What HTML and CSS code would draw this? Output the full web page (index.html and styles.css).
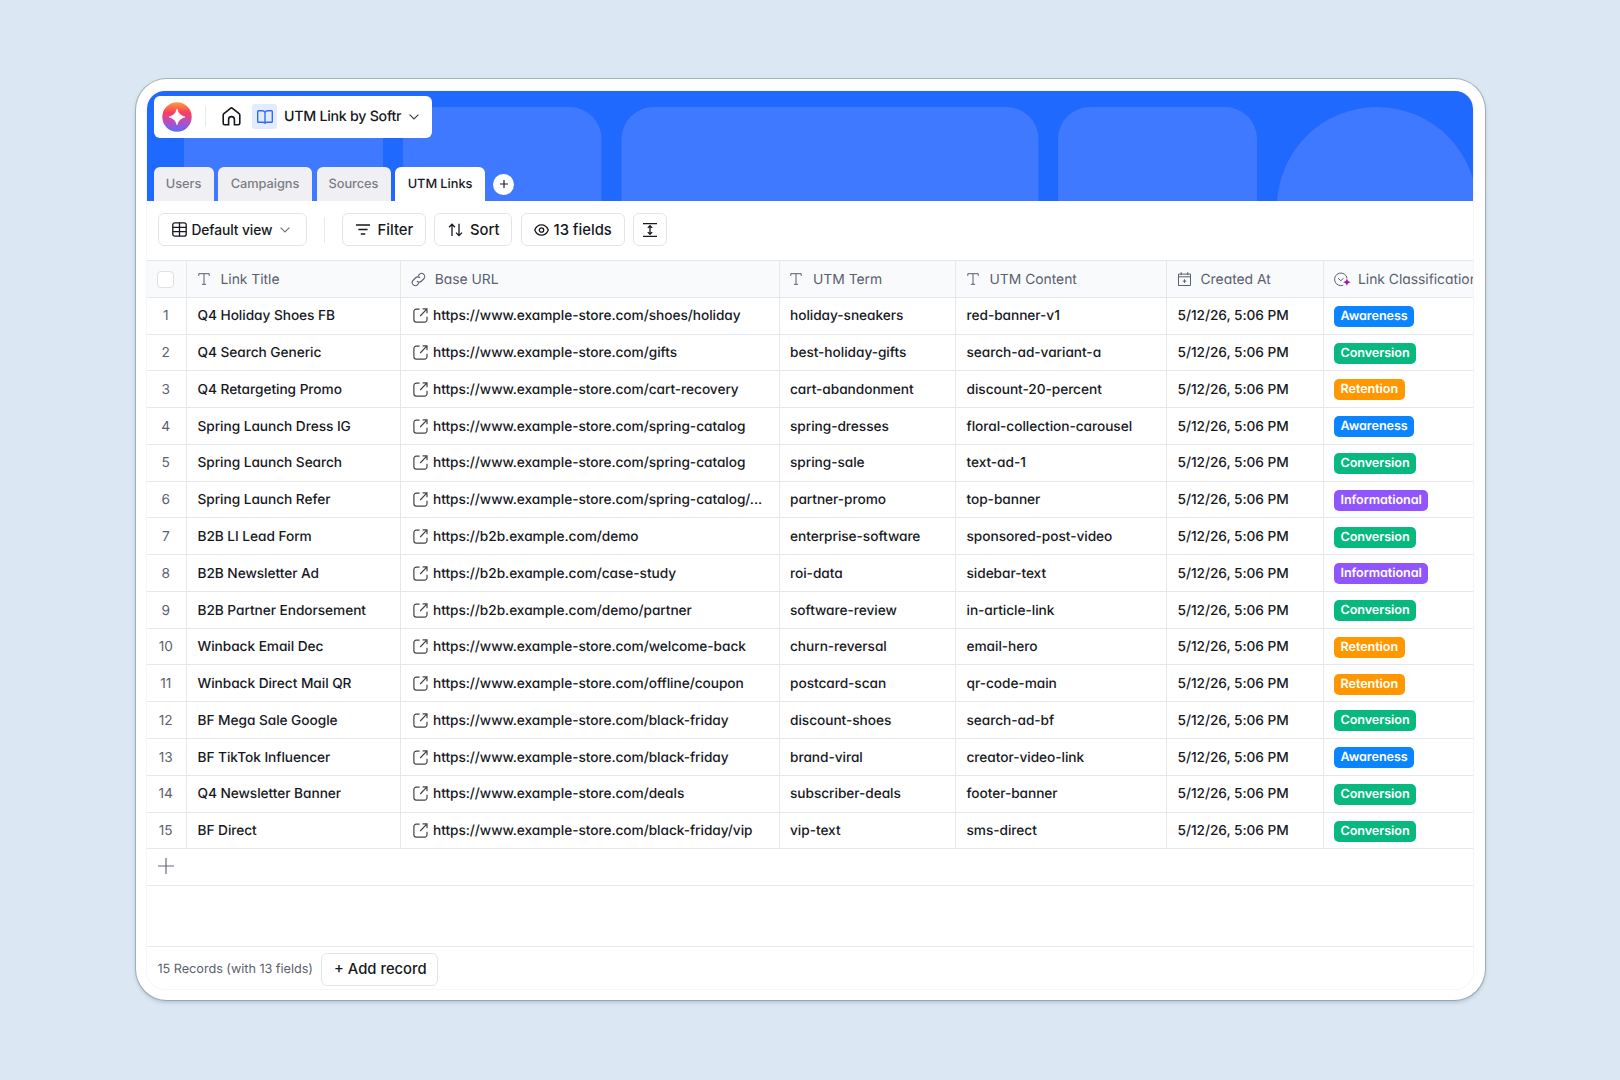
FILE: index.html
```html
<!DOCTYPE html>
<html lang="en">
<head>
<meta charset="utf-8">
<title>UTM Link by Softr</title>
<link rel="stylesheet" href="styles.css">
</head>
<body>
<svg class="sprite" width="0" height="0" aria-hidden="true">
  <symbol id="i-text" viewBox="0 0 12 12"><path d="M.8 2.9V.7h10.4v2.2M6 .7v10.6M3.9 11.3h4.2"/></symbol>
  <symbol id="i-open" viewBox="0 0 15 15"><path d="M6.6 1.2H3.2A2.3 2.3 0 0 0 .9 3.5v8.300a2.300 2.300 0 0 0 2.300 2.300h8.500a2.300 2.300 0 0 0 2.300-2.300V8.700M9.600.900H14v4.400M14 .900 7.200 8"/></symbol>
  <symbol id="i-chev" viewBox="0 0 10 6"><path d="M.6.6 5 5 9.400.6"/></symbol>
</svg>
<main class="window">
  <div class="app">
    <header class="banner">
      <svg class="shapes" viewBox="0 0 1326 110" width="1326" height="110">
        <rect x="37" y="16" width="199" height="140" rx="32"/>
        <rect x="256" y="16" width="198.500" height="140" rx="32"/>
        <rect x="474.500" y="16" width="417" height="140" rx="32"/>
        <rect x="911" y="16" width="199" height="140" rx="32"/>
        <circle cx="1230" cy="116" r="100"/>
      </svg>
      <div class="brand">
        <svg class="logo" viewBox="0 0 30 30">
          <defs><linearGradient id="lg" x1="0" y1="0" x2="0" y2="1"><stop offset="0" stop-color="#ff9a3d"/><stop offset=".35" stop-color="#fb3f5c"/><stop offset=".62" stop-color="#c24bb5"/><stop offset="1" stop-color="#5b6cff"/></linearGradient></defs>
          <circle cx="15" cy="15" r="14.700" fill="url(#lg)"/>
          <path d="M15 7C16.200 11.400 18.600 13.800 23 15 18.600 16.200 16.200 18.600 15 23 13.800 18.600 11.400 16.200 7 15 11.400 13.800 13.800 11.400 15 7Z" fill="#fff" stroke="#fff" stroke-width=".6" stroke-linejoin="round"/>
        </svg>
        <i class="sep"></i>
        <svg class="home" viewBox="0 0 19 19"><path d="M6.600 17.800H2.700a1.500 1.500 0 0 1-1.500-1.500V8c0-.6.2-1 .7-1.400L8.500 1.300a1.600 1.600 0 0 1 2 0l6.600 5.300c.5.400.7.800.7 1.400v8.300a1.500 1.500 0 0 1-1.500 1.500h-3.900v-5.300a2.900 2.900 0 0 0-5.800 0z"/></svg>
        <span class="book"><svg viewBox="0 0 16 14"><path d="M8 2.300C7.400 1.300 6.500.8 5.300.8H1.500a.8.8 0 0 0-.8.8v9.900c0 .4.300.8.800.8h4.200c1.200 0 1.900.3 2.300.9.4-.6 1.100-.9 2.300-.9h4.200c.5 0 .8-.4.8-.8V1.600a.8.8 0 0 0-.8-.8h-3.800C9.500.8 8.600 1.300 8 2.300zM8 2.300v10.900"/></svg></span>
        <h1 class="title">UTM Link by Softr</h1>
        <svg class="chev"><use href="#i-chev"/></svg>
      </div>
      <nav class="tabs">
        <a class="tab t1">Users</a><a class="tab t2">Campaigns</a><a class="tab t3">Sources</a><a class="tab active t4">UTM Links</a>
        <button class="plus"><svg viewBox="0 0 8 8"><path d="M4 0v8M0 4h8"/></svg></button>
      </nav>
    </header>
    <div class="toolbar">
      <button class="btn b-view"><svg width="15" height="15" viewBox="0 0 15 15"><rect x=".8" y=".8" width="13.400" height="13.400" rx="2"/><path d="M.8 5.300h13.400M.8 9.700h13.400M7.500.8v13.400"/></svg><span>Default view</span><svg class="chev grey"><use href="#i-chev"/></svg></button>
      <i class="sep"></i>
      <button class="btn b-filter"><svg width="14" height="11" viewBox="0 0 14 11"><path d="M0 1h14M2.400 5.500h9.200M4.800 10h4.400"/></svg><span>Filter</span></button>
      <button class="btn b-sort"><svg width="15" height="14" viewBox="0 0 15 14"><path d="M4 13V1.200M1 4.200l3-3 3 3M11 .700v11.900M8 9.600l3 3 3-3"/></svg><span>Sort</span></button>
      <button class="btn b-fields"><svg width="15" height="12" viewBox="0 0 15 12"><path d="M.7 6C2 2.800 4.500.9 7.500.9S13 2.800 14.300 6c-1.300 3.200-3.800 5.100-6.800 5.100S2 9.200.7 6z"/><circle cx="7.500" cy="6" r="2.200"/></svg><span>13 fields</span></button>
      <button class="btn b-height"><svg width="14" height="14" viewBox="0 0 14 14"><path d="M0 .700h14M0 13.300h14M7 3v8M4.800 4.900 7 2.700l2.200 2.200M4.800 9.100 7 11.300l2.200-2.200"/></svg></button>
    </div>
    <section class="table" id="table">
      <div class="row head">
        <div class="cell num"><i class="check"></i></div>
        <div class="cell"><svg class="ic t"><use href="#i-text"/></svg><span>Link Title</span></div>
        <div class="cell"><svg class="ic link" viewBox="0 0 24 24"><path d="M9.500 14.500a4.800 4.800 0 0 0 7 .3l4-4a4.900 4.900 0 0 0-7-7l-2.200 2.200M14.500 9.500a4.800 4.800 0 0 0-7-.3l-4 4a4.900 4.900 0 0 0 7 7l2.200-2.200"/></svg><span>Base URL</span></div>
        <div class="cell"><svg class="ic t"><use href="#i-text"/></svg><span>UTM Term</span></div>
        <div class="cell"><svg class="ic t"><use href="#i-text"/></svg><span>UTM Content</span></div>
        <div class="cell"><svg class="ic cal" viewBox="0 0 13 14"><path d="M.5 2.100h12v11.400H.5zM.5 4.800h12M3.200.2v2.900M9.800.2v2.900M6.500 7.300v3.600M4.700 9.100h3.600"/></svg><span>Created At</span></div>
        <div class="cell last"><svg class="ic ai" viewBox="0 0 17 15"><path d="M13.100 6.300A6.300 6.300 0 1 0 9.200 13.200M4 6.200l2.800 2.500 2.800-2.500"/><path class="spark" d="M12.900 6.300c.6 2.500 1.300 3.200 3.900 3.900-2.600.7-3.300 1.400-3.900 3.900-.6-2.500-1.300-3.200-3.900-3.900 2.600-.7 3.300-1.400 3.900-3.900z"/></svg><span>Link Classification</span></div>
      </div>
    </section>
    <div class="addrow"><svg width="16" height="16" viewBox="0 0 16 16"><path d="M8 0v16M0 8h16"/></svg></div>
    <footer class="footer"><span class="count">15 Records (with 13 fields)</span><button class="btn b-add">+ Add record</button></footer>
  </div>
</main>
<script src="rows.js"></script>
</body>
</html>
```
FILE: rows.js
```js
const S = 'https://www.example-store.com/';
const B = 'https://b2b.example.com/';
const rows = [
  ['Q4 Holiday Shoes FB', S + 'shoes/holiday', 'holiday-sneakers', 'red-banner-v1', 'Awareness'],
  ['Q4 Search Generic', S + 'gifts', 'best-holiday-gifts', 'search-ad-variant-a', 'Conversion'],
  ['Q4 Retargeting Promo', S + 'cart-recovery', 'cart-abandonment', 'discount-20-percent', 'Retention'],
  ['Spring Launch Dress IG', S + 'spring-catalog', 'spring-dresses', 'floral-collection-carousel', 'Awareness'],
  ['Spring Launch Search', S + 'spring-catalog', 'spring-sale', 'text-ad-1', 'Conversion'],
  ['Spring Launch Refer', S + 'spring-catalog/...', 'partner-promo', 'top-banner', 'Informational'],
  ['B2B LI Lead Form', B + 'demo', 'enterprise-software', 'sponsored-post-video', 'Conversion'],
  ['B2B Newsletter Ad', B + 'case-study', 'roi-data', 'sidebar-text', 'Informational'],
  ['B2B Partner Endorsement', B + 'demo/partner', 'software-review', 'in-article-link', 'Conversion'],
  ['Winback Email Dec', S + 'welcome-back', 'churn-reversal', 'email-hero', 'Retention'],
  ['Winback Direct Mail QR', S + 'offline/coupon', 'postcard-scan', 'qr-code-main', 'Retention'],
  ['BF Mega Sale Google', S + 'black-friday', 'discount-shoes', 'search-ad-bf', 'Conversion'],
  ['BF TikTok Influencer', S + 'black-friday', 'brand-viral', 'creator-video-link', 'Awareness'],
  ['Q4 Newsletter Banner', S + 'deals', 'subscriber-deals', 'footer-banner', 'Conversion'],
  ['BF Direct', S + 'black-friday/vip', 'vip-text', 'sms-direct', 'Conversion'],
];
document.getElementById('table').insertAdjacentHTML('beforeend', rows.map((r, i) => `
  <div class="row">
    <div class="cell num">${i + 1}</div>
    <div class="cell">${r[0]}</div>
    <div class="cell url"><svg class="open"><use href="#i-open"/></svg>${r[1]}</div>
    <div class="cell">${r[2]}</div>
    <div class="cell">${r[3]}</div>
    <div class="cell">5/12/26, 5:06 PM</div>
    <div class="cell last"><span class="tag ${r[4].toLowerCase()}">${r[4]}</span></div>
  </div>`).join(''));
```
FILE: styles.css
```css
* { box-sizing: border-box; }
body {
  margin: 0;
  width: 1620px;
  height: 1080px;
  padding: 79px 0 0 135.500px;
  background: #dbe8f3;
  font-family: Inter, "Liberation Sans", sans-serif;
  text-rendering: geometricPrecision;
  color: #16181d;
  overflow: hidden;
}
.sprite { position: absolute; }
svg { display: block; flex: none; fill: none; stroke: currentColor; stroke-width: 1.300; }
svg.logo, svg.shapes { stroke: none; }
button { font: inherit; color: inherit; cursor: pointer; }
.window {
  width: 1349.500px;
  height: 921px;
  padding: 12px 12px 11.500px 11.500px;
  border-radius: 31px;
  background: #fff;
  box-shadow: 0 0 0 1px rgba(120, 135, 145, .5), 0 2px 4px rgba(60, 80, 100, .3);
}
.app {
  width: 1326px;
  height: 898px;
  border-radius: 18px;
  overflow: hidden;
  display: flex;
  flex-direction: column;
  box-shadow: 0 0 0 1px #f5f6f7;
}
.banner {
  position: relative;
  height: 110px;
  flex: none;
  background: #1f69ff;
  padding: 5px 0 0 6.500px;
  display: flex;
  flex-direction: column;
  justify-content: space-between;
}
.shapes { position: absolute; left: 0; top: 0; fill: #3f79ff; }
.brand {
  position: relative;
  width: 278px;
  height: 41.500px;
  border-radius: 6px;
  background: #fff;
  display: flex;
  align-items: center;
  padding: 0 0 0 8.500px;
}
.logo { width: 30px; height: 30px; }
.sep { width: 1px; background: #e8e9ec; flex: none; }
.brand .sep { height: 21px; margin: 0 16px 0 12.500px; }
.home { width: 19px; height: 19px; stroke-width: 1.600; }
.book {
  width: 25px; height: 25px; margin-left: 11.500px; border-radius: 3px;
  background: #e3ebfd; color: #2f6df6; display: grid; place-items: center;
}
.book svg { width: 16px; height: 14px; stroke-width: 1.400; }
.title { margin: 0 0 0 7px; width: 118px; font-size: 14.200px; letter-spacing: -.26px; font-weight: 550; white-space: nowrap; }
.chev { width: 10px; height: 6px; stroke-width: 1.200; margin-left: 7px; color: #444; }
.chev.grey { color: #777; margin-left: 9px; }
.tabs { position: relative; display: flex; align-items: flex-end; gap: 4.500px; }
.tab {
  height: 34px; border-radius: 6px 6px 0 0; background: #f0f0f4; color: #7b7c84;
  font-size: 12.800px; letter-spacing: -.05px; font-weight: 530; display: grid; place-items: center;
}
.tab.active { background: #fff; color: #16181d; }
.t1 { width: 60px; }
.t2 { width: 94px; }
.t3 { width: 74px; }
.t4 { width: 90px; }
.plus {
  width: 21px; height: 21px; border: 0; padding: 0; border-radius: 50%; background: #fff;
  display: grid; place-items: center; margin: 0 0 6.500px 3.500px; color: #222;
}
.plus svg { width: 8px; height: 8px; stroke-width: 1.200; }
.toolbar {
  height: 58.800px; flex: none; display: flex; padding: 12.300px 0 0 10.500px; gap: 8.500px;
}
.toolbar .sep { height: 26px; margin: 4px 8.500px 0 8px; }
.btn {
  height: 33px; border: 1px solid #e4e5e9; border-radius: 6px; background: #fff;
  display: flex; align-items: center; padding: 0 0 0 13px; font-size: 14.800px; font-weight: 500; white-space: nowrap;
}
.b-view { width: 149.500px; font-size: 13.800px; letter-spacing: -.1px; }
.b-view span { margin-left: 5px; width: 82px; text-align: left; }
.b-view .chev.grey { margin-left: 6px; }
.b-filter { width: 84px; }
.b-filter span { margin-left: 8px; }
.b-sort { width: 78px; }
.b-sort span { margin-left: 7px; }
.b-fields { width: 104px; padding-left: 12px; }
.b-fields span { margin-left: 5px; }
.b-height { width: 34px; padding: 0; justify-content: center; }
.table { font-size: 13.700px; letter-spacing: -.05px; font-weight: 500; font-feature-settings: "cv11" 1; flex: none; }
.row {
  display: grid; grid-template-columns: 40px 214px 378.500px 176.500px 211px 157px 149px;
  height: 36.770px; border-bottom: 1px solid #e6e7ea;
}
.row.head {
  height: 38px; border-top: 1px solid #e6e7ea; background: #f8fafc; font-weight: 400; font-size: 13.900px; letter-spacing: -.03px; color: #5c5f6e;
}
.cell {
  border-right: 1px solid #e6e7ea; padding: 1.500px 0 0 10.500px; display: flex; align-items: center;
  white-space: nowrap; overflow: hidden; line-height: 20px;
}
.cell.last { border-right: 0; padding-left: 10px; }
.num { padding: 1.500px 1.500px 0 0; justify-content: center; font-weight: 400; color: #5c5f6e; }
.check { width: 17px; height: 17px; border: 1px solid #dfe1e5; border-radius: 4px; background: #fff; }
.ic { stroke-width: 1; margin-bottom: 1px; }
.ic.t { width: 12px; height: 12px; margin-right: 11px; }
.ic.link { width: 15px; height: 15px; margin-right: 9px; margin-left: -.8px; stroke-width: 1.700; }
.ic.cal { width: 13px; height: 14px; margin-right: 10px; }
.ic.ai { width: 17px; height: 15px; margin-right: 7px; }
.spark { fill: #a01fa5; stroke: none; }
.open { width: 15px; height: 15px; margin: 0 5px 1px 0; color: #444; stroke-width: 1.200; }
.url { padding-left: 12px; }
.tag {
  height: 21px; line-height: 21px; border-radius: 5px; padding: 0 6.500px; color: #fff; font-size: 12.600px; letter-spacing: -.06px; font-weight: 600;
}
.awareness { background: #0a84ff; }
.conversion { background: #08b97f; }
.retention { background: #ff9800; }
.informational { background: #9155fd; }
.addrow { height: 37px; flex: none; border-bottom: 1px solid #e6e7ea; padding: 9px 0 0 11px; color: #666a75; }
.addrow svg { stroke-width: 1.200; }
.footer {
  margin-top: auto; height: 43px; flex: none; border-top: 1px solid #e6e7ea; display: flex; align-items: center; padding: 2.500px 0 0 10.500px;
}
.count { width: 163.500px; font-size: 12.700px; letter-spacing: -.04px; color: #5c5f6e; white-space: nowrap; }
.b-add { width: 117px; padding-left: 12px; }
```
